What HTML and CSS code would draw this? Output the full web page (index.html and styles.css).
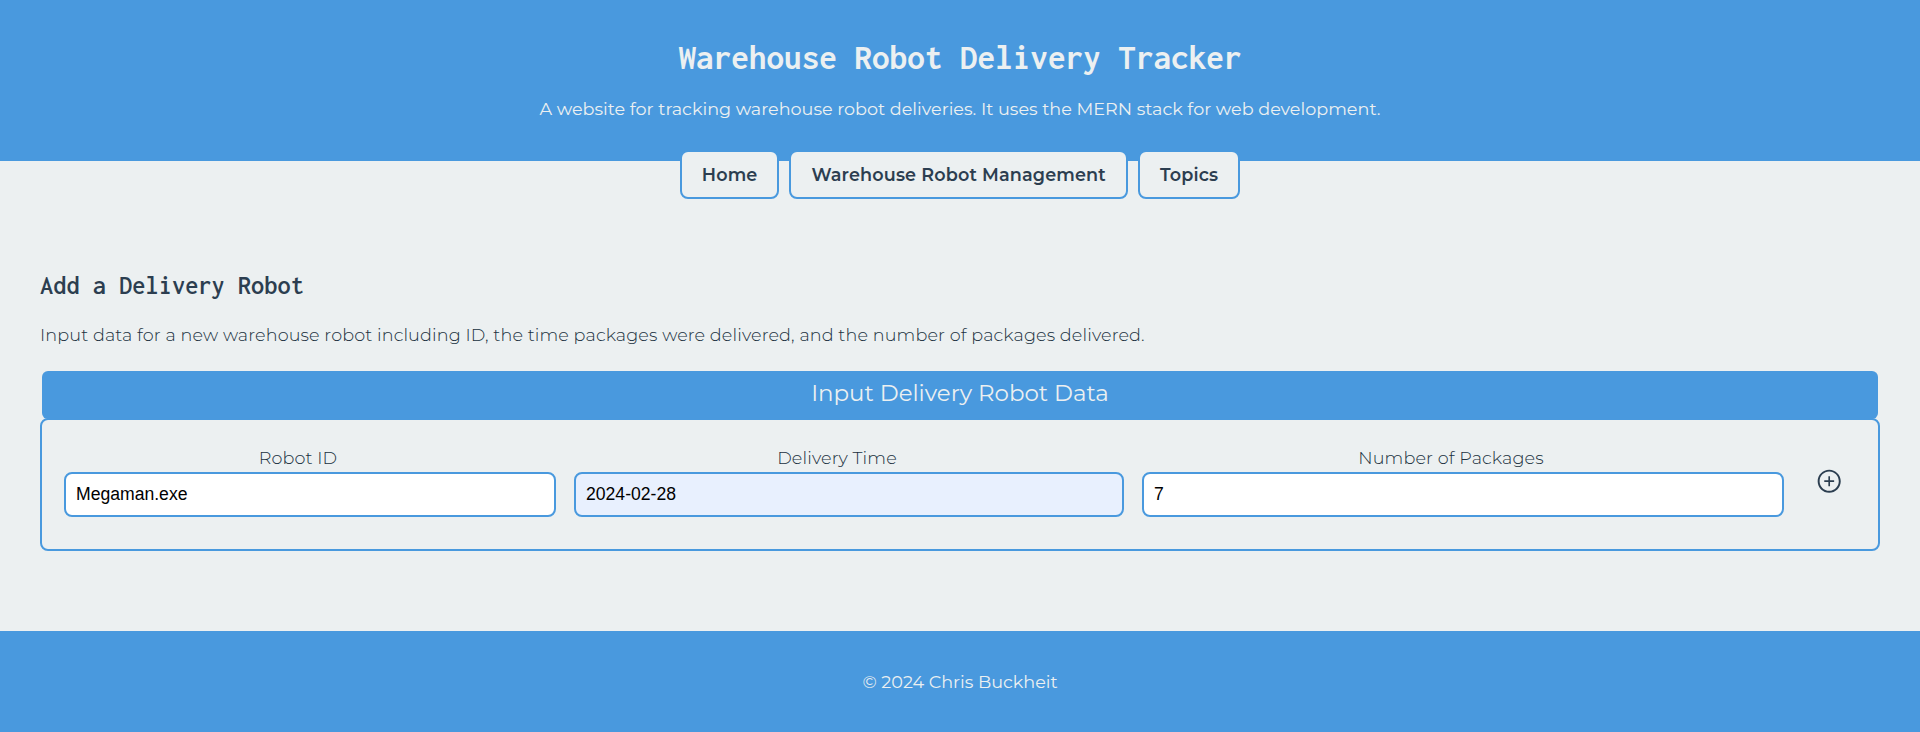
FILE: index.html
```
<!DOCTYPE html>
<html lang="en">
<head>
<meta charset="utf-8">
<title>Warehouse Robot Delivery Tracker</title>
<link rel="stylesheet" href="styles.css">
</head>
<body>
<header class="site-header">
  <h1 class="site-title">Warehouse Robot Delivery Tracker</h1>
  <p class="site-intro">A website for tracking warehouse robot deliveries. It uses the MERN stack for web development.</p>
</header>
<nav class="site-nav">
  <a class="nav-link" href="#">Home</a>
  <a class="nav-link" href="#">Warehouse Robot Management</a>
  <a class="nav-link" href="#">Topics</a>
</nav>
<main class="content">
  <h2 class="page-title">Add a Delivery Robot</h2>
  <p class="page-text">Input data for a new warehouse robot including ID, the time packages were delivered, and the number of packages delivered.</p>
  <div class="form-caption">Input Delivery Robot Data</div>
  <form class="robot-form">
    <div class="field">
      <label class="field-label" for="robot-id">Robot ID</label>
      <input class="field-input" id="robot-id" type="text" value="Megaman.exe">
    </div>
    <div class="field">
      <label class="field-label" for="time">Delivery Time</label>
      <input class="field-input autofilled" id="time" type="text" value="2024-02-28">
    </div>
    <div class="field">
      <label class="field-label" for="count">Number of Packages</label>
      <input class="field-input" id="count" type="text" value="7">
    </div>
    <button class="add-button" type="button" aria-label="Add">
      <svg class="add-icon" viewBox="0 0 1024 1024" fill="currentColor"><path d="M696 480H544V328c0-4.400-3.600-8-8-8h-48c-4.400 0-8 3.600-8 8v152H328c-4.400 0-8 3.600-8 8v48c0 4.400 3.600 8 8 8h152v152c0 4.400 3.600 8 8 8h48c4.400 0 8-3.600 8-8V544h152c4.400 0 8-3.600 8-8v-48c0-4.400-3.600-8-8-8z"/><path d="M512 64C264.600 64 64 264.600 64 512s200.600 448 448 448 448-200.600 448-448S759.400 64 512 64zm0 820c-205.400 0-372-166.600-372-372s166.600-372 372-372 372 166.600 372 372-166.600 372-372 372z"/></svg>
    </button>
  </form>
</main>
<footer class="site-footer">© 2024 Chris Buckheit</footer>
</body>
</html>
```
FILE: styles.css
```
* { box-sizing: border-box; }
body {
  margin: 0;
  min-height: 732px;
  display: flex;
  flex-direction: column;
  background: #ecf0f1;
  color: #2c3e50;
  font: 400 17.6px/30px Montserrat, Inter, sans-serif;
}
h1, h2, p { margin: 0; }
.site-header {
  height: 161px;
  padding-top: 38px;
  background: #4999de;
  color: #ecf0f1;
  text-align: center;
}
.site-title {
  margin-bottom: 16px;
  font: 700 35.2px/40px Inconsolata, "DejaVu Sans Mono", monospace;
}
.site-nav {
  display: flex;
  justify-content: center;
  gap: 10px;
  height: 49px;
  margin-top: -11px;
}
.nav-link {
  padding: 0 20px;
  border: 2px solid #4999de;
  border-radius: 8px;
  background: #ecf0f1;
  color: #2c3e50;
  font-weight: 600;
  letter-spacing: 0.15px;
  line-height: 46px;
  text-decoration: none;
  white-space: nowrap;
}
.content { flex: 1; padding: 68px 40px 80px; }
.page-title {
  margin-bottom: 17px;
  font: 600 26.4px/36px Inconsolata, "DejaVu Sans Mono", monospace;
}
.page-text, .field-label {
  color: #203040;
  font-weight: 300;
  letter-spacing: 0.12px;
}
.form-caption {
  height: 48px;
  margin: 21px 2px -1px;
  border-radius: 6px;
  background: #4999de;
  color: #ecf0f1;
  font-size: 22.88px;
  line-height: 44px;
  text-align: center;
}
.robot-form {
  display: grid;
  grid-template-columns: 492px 550px 642px 54px;
  column-gap: 18px;
  height: 133px;
  padding: 24px 0 0 22px;
  border: 2px solid #4999de;
  border-radius: 8px;
}
.field { display: flex; flex-direction: column; }
.field-label { padding-right: 24px; line-height: 28px; text-align: center; }
.field-input {
  width: 100%;
  height: 45px;
  padding: 0 10px;
  border: 2px solid #4999de;
  border-radius: 8px;
  background: #fff;
  color: #000;
  font: 17.6px "Liberation Sans", Arial, sans-serif;
}
.autofilled { background: #e8f0fe; }
.add-button {
  display: flex;
  justify-content: center;
  height: 76px;
  padding: 24px 0 0;
  border: 0;
  background: none;
  color: #2c3e50;
}
.add-icon { width: 26.4px; height: 26.4px; }
.site-footer {
  height: 101px;
  background: #4999de;
  color: #ecf0f1;
  line-height: 102px;
  text-align: center;
}
```
